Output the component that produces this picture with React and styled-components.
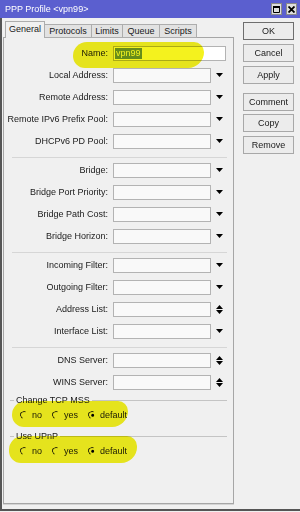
import React from 'react';
import styled, { createGlobalStyle } from 'styled-components';

const GlobalStyle = createGlobalStyle`
  html, body {
    margin: 0;
    padding: 0;
    background: #f0f0f0;
  }
  body {
    font-family: "Liberation Sans", Arial, sans-serif;
    font-size: 9px;
    color: #1a1a1a;
  }
  * {
    box-sizing: border-box;
  }
`;

const Window = styled.div`
  width: 300px;
  height: 511px;
  display: flex;
  flex-direction: column;
  background: #f0f0f0;
`;

const TitleBar = styled.div`
  height: 18px;
  flex: none;
  display: flex;
  align-items: center;
  justify-content: space-between;
  padding: 0 3px 0 5px;
  background: #5b5fcf;
`;

const Title = styled.span`
  color: #fff;
  font-size: 9px;
  line-height: 18px;
`;

const TitleButtons = styled.div`
  display: flex;
  gap: 4px;
`;

const TitleButton = styled.div`
  width: 11px;
  height: 12px;
  background: #dedede;
  border: 1px solid #8a8a8a;
  display: flex;
  align-items: center;
  justify-content: center;
`;

const Body = styled.div`
  flex: 1;
  display: flex;
  border-left: 2px solid #555;
  border-bottom: 2px solid #555;
`;

const LeftColumn = styled.div`
  width: 232px;
  display: flex;
  flex-direction: column;
  padding: 0 0 5px 1px;
`;

const TabBar = styled.div`
  height: 20px;
  display: flex;
  align-items: flex-end;
  padding-left: 3px;
  margin-bottom: -1px;
  position: relative;
  z-index: 1;
`;

const Tab = styled.div`
  width: ${p => p.w}px;
  height: ${p => (p.active ? 17 : 14)}px;
  display: flex;
  align-items: center;
  justify-content: center;
  background: ${p => (p.active ? '#f0f0f0' : '#e2e2e2')};
  border: 1px solid #adadad;
  border-bottom: ${p => (p.active ? 'none' : '1px solid #adadad')};
  margin-left: -1px;
  padding-bottom: ${p => (p.active ? 2 : 0)}px;
  font-size: 9px;
`;

const Panel = styled.div`
  flex: 1;
  position: relative;
  border: 1px solid #a6a6a6;
  box-shadow: 0 1px 0 #d4d4d4;
  padding: 4px 6px 0 0;
`;

const FieldRow = styled.div`
  height: 22px;
  display: flex;
  align-items: center;
`;

const Label = styled.div`
  width: 104px;
  margin-right: 5px;
  text-align: right;
  white-space: nowrap;
  font-size: 9px;
`;

const Input = styled.div`
  width: ${p => p.w}px;
  height: 15px;
  background: ${p => (p.white ? '#fff' : '#f9f9f9')};
  border: 1px solid #b3b3b3;
  display: flex;
  align-items: center;
  padding-left: 1px;
`;

const Selection = styled.span`
  background: #6a94d8;
  color: #fff;
  padding: 0 1px;
  line-height: 11px;
  font-size: 9px;
`;

const ArrowCell = styled.div`
  width: 16px;
  display: flex;
  justify-content: center;
  align-items: center;
`;

const Separator = styled.div`
  height: 1px;
  background: #d6d6d6;
  margin: 5px 0 1px 8px;
`;

const GroupBox = styled.div`
  margin-top: ${p => p.top}px;
`;

const GroupHeader = styled.div`
  height: 11px;
  display: flex;
  align-items: center;
  padding-left: 6px;
`;

const GroupLine = styled.div`
  height: 1px;
  background: #c4c4c4;
  width: ${p => (p.short ? '4px' : 'auto')};
  flex: ${p => (p.short ? 'none' : 1)};
`;

const GroupTitle = styled.span`
  padding: 0 2px;
  font-size: 9px;
  line-height: 11px;
`;

const RadioRow = styled.div`
  height: 12px;
  margin-top: 3px;
  display: flex;
  align-items: center;
  gap: 10px;
  padding-left: 16px;
`;

const RadioItem = styled.div`
  display: flex;
  align-items: center;
  gap: 4px;
  font-size: 9px;
`;

const RadioCircle = styled.span`
  width: 8px;
  height: 8px;
  border-radius: 50%;
  border: 1px solid;
  border-color: #333 transparent transparent #333;
  transform: rotate(-20deg);
  display: flex;
  align-items: center;
  justify-content: center;

  &::after {
    content: '';
    width: 3px;
    height: 3px;
    border-radius: 50%;
    background: ${p => (p.checked ? '#000' : 'transparent')};
  }
`;

const Marker = styled.div`
  position: absolute;
  left: ${p => p.x}px;
  top: ${p => p.y}px;
  width: ${p => p.w}px;
  height: ${p => p.h}px;
  background: #f4f21e;
  mix-blend-mode: multiply;
  border-radius: 14px 10px 16px 12px;
  pointer-events: none;
`;

const ButtonColumn = styled.div`
  display: flex;
  flex-direction: column;
  padding: 4px 0 0 9px;
`;

const Button = styled.div`
  width: 51px;
  height: 18px;
  margin-top: ${p => p.gap || 0}px;
  display: flex;
  align-items: center;
  justify-content: center;
  background: #ececec;
  border: 1px solid ${p => (p.primary ? '#6e6e6e' : '#a8a8a8')};
  font-size: 9px;
`;

const DownArrow = () => (
  <svg width="7" height="4" viewBox="0 0 7 4">
    <path d="M0 0H7L3.5 4Z" fill="#000" />
  </svg>
);

const UpDownArrow = () => (
  <svg width="7" height="9" viewBox="0 0 7 9">
    <path d="M0 4L3.5 0L7 4Z M0 5H7L3.5 9Z" fill="#000" />
  </svg>
);

const tabs = [
  { name: 'General', w: 40, active: true },
  { name: 'Protocols', w: 48 },
  { name: 'Limits', w: 32 },
  { name: 'Queue', w: 38 },
  { name: 'Scripts', w: 38 },
];

const sections = [
  [
    { label: 'Local Address', arrow: 'down' },
    { label: 'Remote Address', arrow: 'down' },
    { label: 'Remote IPv6 Prefix Pool', arrow: 'down' },
    { label: 'DHCPv6 PD Pool', arrow: 'down' },
  ],
  [
    { label: 'Bridge', arrow: 'down' },
    { label: 'Bridge Port Priority', arrow: 'down' },
    { label: 'Bridge Path Cost', arrow: 'down' },
    { label: 'Bridge Horizon', arrow: 'down' },
  ],
  [
    { label: 'Incoming Filter', arrow: 'down' },
    { label: 'Outgoing Filter', arrow: 'down' },
    { label: 'Address List', arrow: 'updown' },
    { label: 'Interface List', arrow: 'down' },
  ],
  [
    { label: 'DNS Server', arrow: 'updown' },
    { label: 'WINS Server', arrow: 'updown' },
  ],
];

const groups = [
  { title: 'Change TCP MSS', top: 2 },
  { title: 'Use UPnP', top: 10 },
];

const options = ['no', 'yes', 'default'];

const buttons = [
  { text: 'OK', primary: true },
  { text: 'Cancel', gap: 4 },
  { text: 'Apply', gap: 4 },
  { text: 'Comment', gap: 9 },
  { text: 'Copy', gap: 3 },
  { text: 'Remove', gap: 4 },
];

function Field({ label, arrow }) {
  return (
    <FieldRow>
      <Label>{label}:</Label>
      <Input w={98} />
      <ArrowCell>{arrow === 'updown' ? <UpDownArrow /> : <DownArrow />}</ArrowCell>
    </FieldRow>
  );
}

export default function App() {
  return (
    <Window>
      <GlobalStyle />
      <TitleBar>
        <Title>PPP Profile &lt;vpn99&gt;</Title>
        <TitleButtons>
          <TitleButton>
            <svg width="7" height="7" viewBox="0 0 7 7">
              <path d="M0.5 0.5H6.5V6.5H0.5Z" fill="none" stroke="#000" />
              <path d="M0 0H7V2H0Z" fill="#000" />
            </svg>
          </TitleButton>
          <TitleButton>
            <svg width="7" height="7" viewBox="0 0 7 7">
              <path d="M0.5 0.5L6.5 6.5M6.5 0.5L0.5 6.5" stroke="#000" strokeWidth="1.8" />
            </svg>
          </TitleButton>
        </TitleButtons>
      </TitleBar>
      <Body>
        <LeftColumn>
          <TabBar>
            {tabs.map(t => (
              <Tab key={t.name} w={t.w} active={t.active}>
                {t.name}
              </Tab>
            ))}
          </TabBar>
          <Panel>
            <FieldRow>
              <Label>Name:</Label>
              <Input w={113} white>
                <Selection>vpn99</Selection>
              </Input>
            </FieldRow>
            {sections.map((rows, i) => (
              <React.Fragment key={i}>
                {i > 0 && <Separator />}
                {rows.map(r => (
                  <Field key={r.label} {...r} />
                ))}
              </React.Fragment>
            ))}
            {groups.map(g => (
              <GroupBox key={g.title} top={g.top}>
                <GroupHeader>
                  <GroupLine short />
                  <GroupTitle>{g.title}</GroupTitle>
                  <GroupLine />
                </GroupHeader>
                <RadioRow>
                  {options.map(o => (
                    <RadioItem key={o}>
                      <RadioCircle checked={o === 'default'} />
                      {o}
                    </RadioItem>
                  ))}
                </RadioRow>
              </GroupBox>
            ))}
            <Marker x={69} y={4} w={131} h={26} />
            <Marker x={8} y={363} w={116} h={26} />
            <Marker x={5} y={398} w={128} h={27} />
          </Panel>
        </LeftColumn>
        <ButtonColumn>
          {buttons.map(b => (
            <Button key={b.text} primary={b.primary} gap={b.gap}>
              {b.text}
            </Button>
          ))}
        </ButtonColumn>
      </Body>
    </Window>
  );
}
